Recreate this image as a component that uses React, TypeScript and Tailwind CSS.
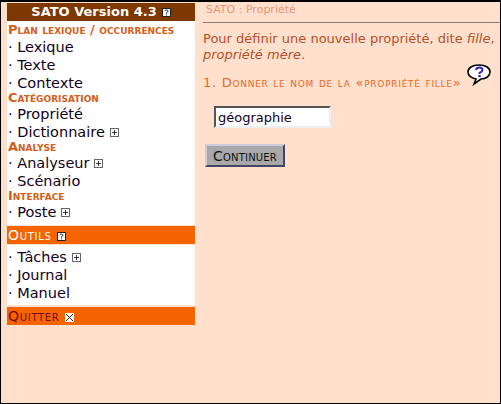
import React from 'react';

const font = 'font-["DejaVu_Sans",Verdana,sans-serif]';

function HelpBox() {
  return (
    <svg width="9" height="9" viewBox="0 0 9 9" className="inline-block ml-[5px] align-[-1px]">
      <rect x="0" y="0" width="9" height="9" fill="#fff" />
      <rect x="0.5" y="0.5" width="8" height="8" fill="none" stroke="#222" />
      <path d="M3 3.2 Q3 2 4.5 2 Q6 2 6 3.2 Q6 4 4.5 4.6 L4.5 5.6 M4.5 6.4 L4.5 7.4" fill="none" stroke="#222" />
    </svg>
  );
}

function PlusBox() {
  return (
    <svg width="9" height="9" viewBox="0 0 9 9" className="inline-block ml-[5px] align-[0px]">
      <rect x="0.5" y="0.5" width="8" height="8" fill="#fff" stroke="#666" />
      <path d="M2 4.5 H7 M4.5 2 V7" stroke="#333" />
    </svg>
  );
}

function CloseBox() {
  return (
    <svg width="9" height="9" viewBox="0 0 9 9" className="inline-block ml-[5px] align-[-1px]">
      <rect x="0" y="0" width="9" height="9" fill="#fff" />
      <path d="M1 1 L8 8 M8 1 L1 8" stroke="#222" />
    </svg>
  );
}

function SectionTitle({ children }: { children: React.ReactNode }) {
  return (
    <div className="h-[13px] pl-px text-[13px] leading-[12px] font-bold text-[#d4601a] [font-variant:small-caps] whitespace-nowrap">
      {children}
    </div>
  );
}

function Item({ label, plus }: { label: string; plus?: boolean }) {
  return (
    <div className="h-[18px] pl-px text-[14.5px] leading-[18px] text-[#110022] whitespace-nowrap">
      · {label}
      {plus && <PlusBox />}
    </div>
  );
}

export default function App() {
  return (
    <div className={`${font} w-[501px] h-[404px] bg-[#ffe0cc] border border-black border-t-2 flex overflow-hidden`}>
      <aside className="w-[188px] ml-[6px] mt-[1px] shrink-0">
        <div className="h-[18px] bg-[#7f3700] text-white text-[13px] leading-[18px] font-bold text-center whitespace-nowrap">
          SATO Version 4.3
          <HelpBox />
        </div>
        <div className="bg-white h-[204px] pt-[3px]">
          <SectionTitle>Plan lexique / occurrences</SectionTitle>
          <div className="pt-[1px]">
            <Item label="Lexique" />
            <Item label="Texte" />
            <Item label="Contexte" />
          </div>
          <SectionTitle>Catégorisation</SectionTitle>
          <Item label="Propriété" />
          <Item label="Dictionnaire" plus />
          <SectionTitle>Analyse</SectionTitle>
          <Item label="Analyseur" plus />
          <Item label="Scénario" />
          <SectionTitle>Interface</SectionTitle>
          <Item label="Poste" plus />
        </div>
        <div className="mt-px h-[18px] pl-px bg-[#f46400] text-white text-[14px] leading-[18px] tracking-[0.7px] [font-variant:small-caps]">
          Outils
          <HelpBox />
        </div>
        <div className="mt-px bg-white h-[60px] pt-[3px]">
          <Item label="Tâches" plus />
          <Item label="Journal" />
          <Item label="Manuel" />
        </div>
        <div className="mt-[2px] h-[18px] pl-px bg-[#f46400] text-[#7a0a20] text-[14px] leading-[18px] tracking-[0.7px] [font-variant:small-caps]">
          Quitter
          <CloseBox />
        </div>
      </aside>

      <main className="flex-1 min-w-0 pl-[8px] overflow-hidden">
        <div className="h-[20px] pl-[3px] pt-[2px] text-[11px] leading-[12px] text-[#e8957a]">SATO : Propriété</div>
        <hr className="border-0 h-px bg-[#8a7a70]" />
        <p className="mt-[8px] text-[13px] leading-[16px] text-[#b5502a] whitespace-nowrap">
          Pour définir une nouvelle propriété, dite <i>fille</i>,
          <br />
          <i>propriété mère</i>.
        </p>
        <div className="mt-[6px] flex items-start">
          <div className="mt-[6px] text-[13px] leading-[15px] tracking-[0.72px] text-[#e8682a] [font-variant:small-caps] whitespace-nowrap">
            1. Donner le nom de la «propriété fille»
          </div>
          <svg width="24" height="24" viewBox="0 0 24 24" className="ml-[6px] -mt-[6px] shrink-0">
            <path d="M12 2 C5 2 1 5 1 9 C1 13 5 15 9 16 L7 21 L14 16 C19 16 23 13 23 9 C23 5 19 2 12 2 Z" fill="#fff" stroke="#000" strokeWidth="1.6" />
            <path d="M9 7 Q9.5 4.5 12.5 4.5 Q15.5 4.5 15.5 7 Q15.5 8.5 12.5 10 L12.5 11" fill="none" stroke="#3a22c8" strokeWidth="2" />
            <rect x="11.3" y="12" width="2.4" height="2.2" fill="#3a22c8" />
          </svg>
        </div>
        <input
          readOnly
          value="géographie"
          className={`${font} block mt-[16px] ml-[11px] w-[117px] h-[22px] bg-white pl-[2px] text-[13px] text-[#110022] border-2 border-t-[#555] border-l-[#555] border-r-[#eee] border-b-[#eee] outline-none`}
        />
        <button
          className={`${font} block mt-[16px] ml-[2px] w-[80px] h-[23px] bg-[#a8a8a8] text-[14px] tracking-[0.2px] leading-[16px] text-[#111] [font-variant:small-caps] border-2 border-t-[#ccccdd] border-l-[#ccccdd] border-r-[#444466] border-b-[#444466]`}
        >
          Continuer
        </button>
      </main>
    </div>
  );
}
